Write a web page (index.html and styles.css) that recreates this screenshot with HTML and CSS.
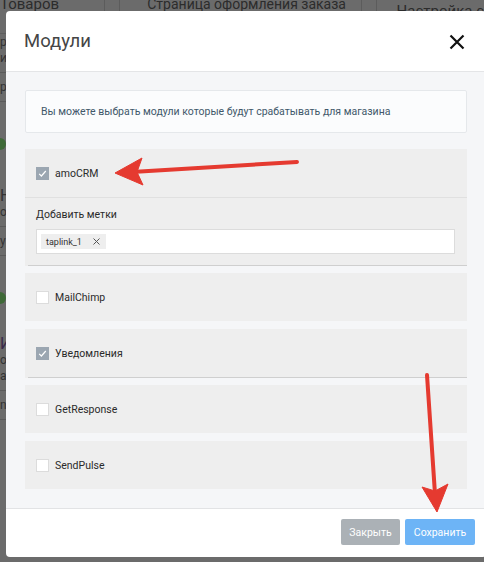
FILE: index.html
```html
<!DOCTYPE html>
<html lang="ru">
<head>
<meta charset="utf-8">
<title>Модули</title>
<link rel="stylesheet" href="styles.css">
</head>
<body>
<div class="backdrop">
  <div class="bd-head">
    <span class="bd-col bd-c1">Товаров</span>
    <span class="bd-sep"></span>
    <span class="bd-col bd-c2">Страница оформления заказа</span>
    <span class="bd-sep"></span>
    <span class="bd-col bd-c3">Настройка с</span>
  </div>
  <div class="bd-side">
    <span class="bd-t s1">ров</span>
    <span class="bd-t s2">ие</span>
    <span class="bd-line"></span>
    <span class="bd-t s3">ров</span>
    <span class="bd-line"></span>
    <span class="bd-dot"></span>
    <span class="bd-t s4">Нас</span>
    <span class="bd-t s5">ор</span>
    <span class="bd-line"></span>
    <span class="bd-t s6">ун</span>
    <span class="bd-line"></span>
    <span class="bd-dot"></span>
    <span class="bd-t s7">И</span>
    <span class="bd-t s8">ol</span>
    <span class="bd-t s9">a:</span>
    <span class="bd-line"></span>
    <span class="bd-t s10">no</span>
    <span class="bd-line"></span>
  </div>
</div>

<div class="modal">
  <div class="modal-header">
    <h2 class="modal-title">Модули</h2>
    <svg class="close" width="16" height="16" viewBox="0 0 16 16"><path d="M1.5 1.5 L14.5 14.5 M14.5 1.5 L1.5 14.5" stroke="#111" stroke-width="2.2" fill="none"/></svg>
  </div>
  <div class="modal-body">
    <div class="info">Вы можете выбрать модули которые будут срабатывать для магазина</div>

    <div class="panel lined">
      <div class="row"><span class="cb on"><svg width="13" height="13" viewBox="0 0 13 13"><path d="M3.2 6.8 L5.4 9 L9.8 4" stroke="#fff" stroke-width="1.2" fill="none"/></svg></span><span class="lbl">amoCRM</span></div>
      <div class="panel-body">
        <div class="field-lbl">Добавить метки</div>
        <div class="tags-input"><span class="tag">taplink_1<svg class="tag-x" width="7" height="7" viewBox="0 0 7 7"><path d="M0.5 0.5 L6.5 6.5 M6.5 0.5 L0.5 6.5" stroke="#555" stroke-width="1" fill="none"/></svg></span></div>
      </div>
    </div>

    <div class="panel">
      <div class="row"><span class="cb"></span><span class="lbl">MailChimp</span></div>
    </div>

    <div class="panel lined">
      <div class="row"><span class="cb on"><svg width="13" height="13" viewBox="0 0 13 13"><path d="M3.2 6.8 L5.4 9 L9.8 4" stroke="#fff" stroke-width="1.2" fill="none"/></svg></span><span class="lbl">Уведомления</span></div>
    </div>

    <div class="panel">
      <div class="row"><span class="cb"></span><span class="lbl">GetResponse</span></div>
    </div>

    <div class="panel">
      <div class="row"><span class="cb"></span><span class="lbl">SendPulse</span></div>
    </div>
  </div>
  <div class="modal-footer">
    <button class="btn btn-close">Закрыть</button>
    <button class="btn btn-save">Сохранить</button>
  </div>
</div>

<svg class="arrows" width="484" height="562" viewBox="0 0 484 562">
  <g fill="#e53a30" stroke="#e53a30">
    <line x1="297" y1="162" x2="132" y2="172" stroke-width="4" stroke-linecap="round"/>
    <polygon points="115,173 142,158 137,172 143,185" stroke-width="1" stroke-linejoin="round"/>
    <line x1="427" y1="375" x2="435" y2="494" stroke-width="4" stroke-linecap="round"/>
    <polygon points="437,512 422,487 435,491 448,484" stroke-width="1" stroke-linejoin="round"/>
  </g>
</svg>
</body>
</html>
```

FILE: styles.css
```css
* { box-sizing: border-box; }
html, body {
  margin: 0;
  padding: 0;
  width: 484px;
  height: 562px;
  overflow: hidden;
}
body {
  background: #6b6b6b;
  font-family: Roboto, "Liberation Sans", Arial, sans-serif;
  position: relative;
}

/* backdrop page */
.backdrop {
  position: absolute;
  inset: 0;
  color: #2c2c2c;
}
.bd-head {
  display: flex;
  height: 34px;
  border-bottom: 1px solid #5e5e5e;
  font-size: 14px;
  line-height: 16px;
  white-space: nowrap;
}
.bd-col { display: block; white-space: nowrap; }
.bd-c1 { width: 107px; margin-top: -4px; font-size: 15px; }
.bd-c2 { width: 246px; margin-top: -4px; padding-left: 27px; }
.bd-c3 { padding-left: 20px; margin-top: 3px; font-size: 15px; }
.bd-sep {
  width: 16px;
  border-left: 1px solid #5c5c5c;
  border-right: 1px solid #5c5c5c;
  height: 34px;
  flex: none;
}
.bd-side {
  position: absolute;
  left: 0;
  top: 34px;
  width: 10px;
  display: flex;
  flex-direction: column;
  font-size: 12px;
  color: #333;
}
.bd-t { display: block; height: 16px; line-height: 16px; white-space: nowrap; }
.bd-line { display: block; height: 1px; background: #5a5a5a; width: 10px; margin: 6px 0; }
.bd-dot { display: block; width: 12px; height: 12px; border-radius: 50%; background: #3f6a38; margin: 30px 0 20px -6px; }
.s4 { font-size: 16px; margin-top: 18px; }
.s7 { font-size: 16px; margin-top: 12px; color: #3a2a4a; }

/* modal */
.modal {
  position: absolute;
  left: 6px;
  top: 11px;
  width: 480px;
  height: 546px;
  background: #fff;
  border-radius: 4px;
  overflow: hidden;
  display: flex;
  flex-direction: column;
}
.modal-header {
  height: 61px;
  flex: none;
  display: flex;
  align-items: center;
  justify-content: space-between;
  padding: 0 21px 0 18px;
  border-bottom: 1px solid #e4e5e7;
}
.modal-title {
  margin: 0;
  font-weight: 400;
  font-size: 18.5px;
  color: #454545;
}
.close { display: block; margin-top: 2px; }

.modal-body {
  flex: 1;
  background: #f5f6f8;
  padding: 18px 19px 0 19px;
  border-bottom: 1px solid #e2e3e5;
}
.info {
  height: 43px;
  background: #fbfcfd;
  border: 1px solid #e5e8eb;
  border-radius: 2px;
  display: flex;
  align-items: center;
  padding: 0 15px;
  font-size: 10.5px;
  color: #41586a;
  margin-bottom: 16px;
}
.panel {
  background: #eeeeee;
  margin-bottom: 8px;
}
.panel.lined { margin-bottom: 7px; }
.panel.lined::after {
  content: "";
  display: block;
  height: 1px;
  margin-left: 3px;
  background: #cfcfcf;
}
.row {
  height: 48px;
  display: flex;
  align-items: center;
  padding-left: 11px;
}
.cb {
  width: 13px;
  height: 13px;
  background: #fff;
  border: 1px solid #dcdcdc;
  display: flex;
  margin-right: 6px;
}
.cb.on {
  background: #9ba6b1;
  border: none;
}
.lbl {
  font-size: 10.5px;
  color: #2a2a2a;
}
.panel-body {
  border-top: 1px solid #e0e0e0;
  padding: 10px 12px 11px 11px;
}
.field-lbl {
  font-size: 10.5px;
  color: #2a2a2a;
  line-height: 14px;
  margin-bottom: 7px;
}
.tags-input {
  height: 25px;
  background: #fff;
  border: 1px solid #dcdcdc;
  display: flex;
  align-items: center;
  padding-left: 4px;
}
.tag {
  height: 15px;
  background: #eeeeee;
  font-size: 9px;
  color: #333;
  display: flex;
  align-items: center;
  padding: 0 6px 0 5px;
}
.tag-x {
  display: block;
  margin-left: 11px;
}

.modal-footer {
  height: 48px;
  flex: none;
  display: flex;
  align-items: center;
  justify-content: flex-end;
  gap: 5px;
  padding-right: 11px;
  padding-bottom: 2px;
}
.btn {
  height: 26px;
  border: none;
  border-radius: 2px;
  color: #fff;
  font-family: Roboto, "Liberation Sans", Arial, sans-serif;
  font-size: 10.5px;
  padding: 0;
}
.btn-close { width: 59px; background: #abb1b6; }
.btn-save { width: 70px; background: #6db4f6; }

.arrows {
  position: absolute;
  left: 0;
  top: 0;
  pointer-events: none;
}
```
